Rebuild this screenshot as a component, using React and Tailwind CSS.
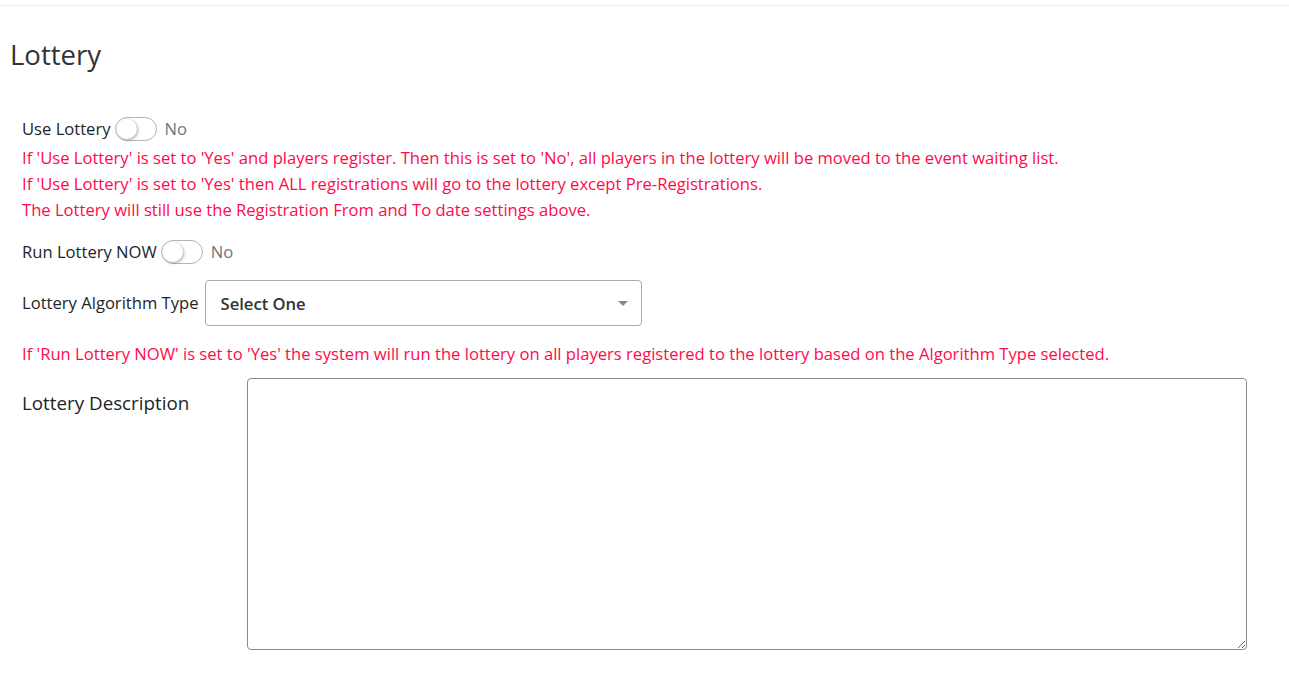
import { useState } from 'react';

function Toggle({ on, onChange }) {
  return (
    <button
      type="button"
      onClick={() => onChange(!on)}
      className="relative inline-block w-[42px] h-[24px] rounded-full border border-[#adb5bd] bg-white align-middle"
    >
      <span className="absolute left-[1px] top-[1px] w-[20px] h-[20px] rounded-full bg-white shadow-[1px_1px_3px_rgba(0,0,0,0.35)]" />
    </button>
  );
}

export default function App() {
  const [useLottery, setUseLottery] = useState(false);
  const [runNow, setRunNow] = useState(false);

  return (
    <div className="min-h-[684px] bg-white text-[#212529] font-['Segoe_UI','Open_Sans',sans-serif]">
      <div className="h-[6px] border-b border-[#eeeeee]" />
      <h1 className="pl-[10px] pt-[29px] text-[27.5px] leading-[40px] text-[#333]">Lottery</h1>

      <div className="pl-[22px] pt-[41px] text-[16.6px]">
        <div className="flex items-center h-[26px]">
          <span>Use Lottery</span>
          <span className="ml-[4px] flex"><Toggle on={useLottery} onChange={setUseLottery} /></span>
          <span className="text-[#6c757d] ml-[8px]">No</span>
        </div>
        <div className="text-[#ff0a4c] leading-[26px] mt-[3px]">
          <p>If 'Use Lottery' is set to 'Yes' and players register. Then this is set to 'No', all players in the lottery will be moved to the event waiting list.</p>
          <p>If 'Use Lottery' is set to 'Yes' then ALL registrations will go to the lottery except Pre-Registrations.</p>
          <p>The Lottery will still use the Registration From and To date settings above.</p>
        </div>

        <div className="flex items-center h-[26px] mt-[16px]">
          <span>Run Lottery NOW</span>
          <span className="ml-[4px] flex"><Toggle on={runNow} onChange={setRunNow} /></span>
          <span className="text-[#6c757d] ml-[8px]">No</span>
        </div>

        <div className="flex items-center gap-[6px] mt-[15px]">
          <span>Lottery Algorithm Type</span>
          <div className="relative w-[437px] h-[46px] border border-[#aaaaaa] rounded-[4px] flex items-center px-[15px] pt-[3px]">
            <span className="font-semibold text-[#333]">Select One</span>
            <span className="absolute right-[13px] top-[20px] w-0 h-0 border-l-[5px] border-r-[5px] border-t-[5px] border-l-transparent border-r-transparent border-t-[#888]" />
          </div>
        </div>

        <p className="text-[#ff0a4c] mt-[15px] leading-[26px]">
          If 'Run Lottery NOW' is set to 'Yes' the system will run the lottery on all players registered to the lottery based on the Algorithm Type selected.
        </p>

        <div className="flex mt-[11px]">
          <label className="w-[225px] text-[18.8px] pt-[11px]">Lottery Description</label>
          <textarea className="w-[1000px] h-[272px] border border-[#8a8a8a] rounded-[4px] p-2 outline-none" />
        </div>
      </div>
    </div>
  );
}
